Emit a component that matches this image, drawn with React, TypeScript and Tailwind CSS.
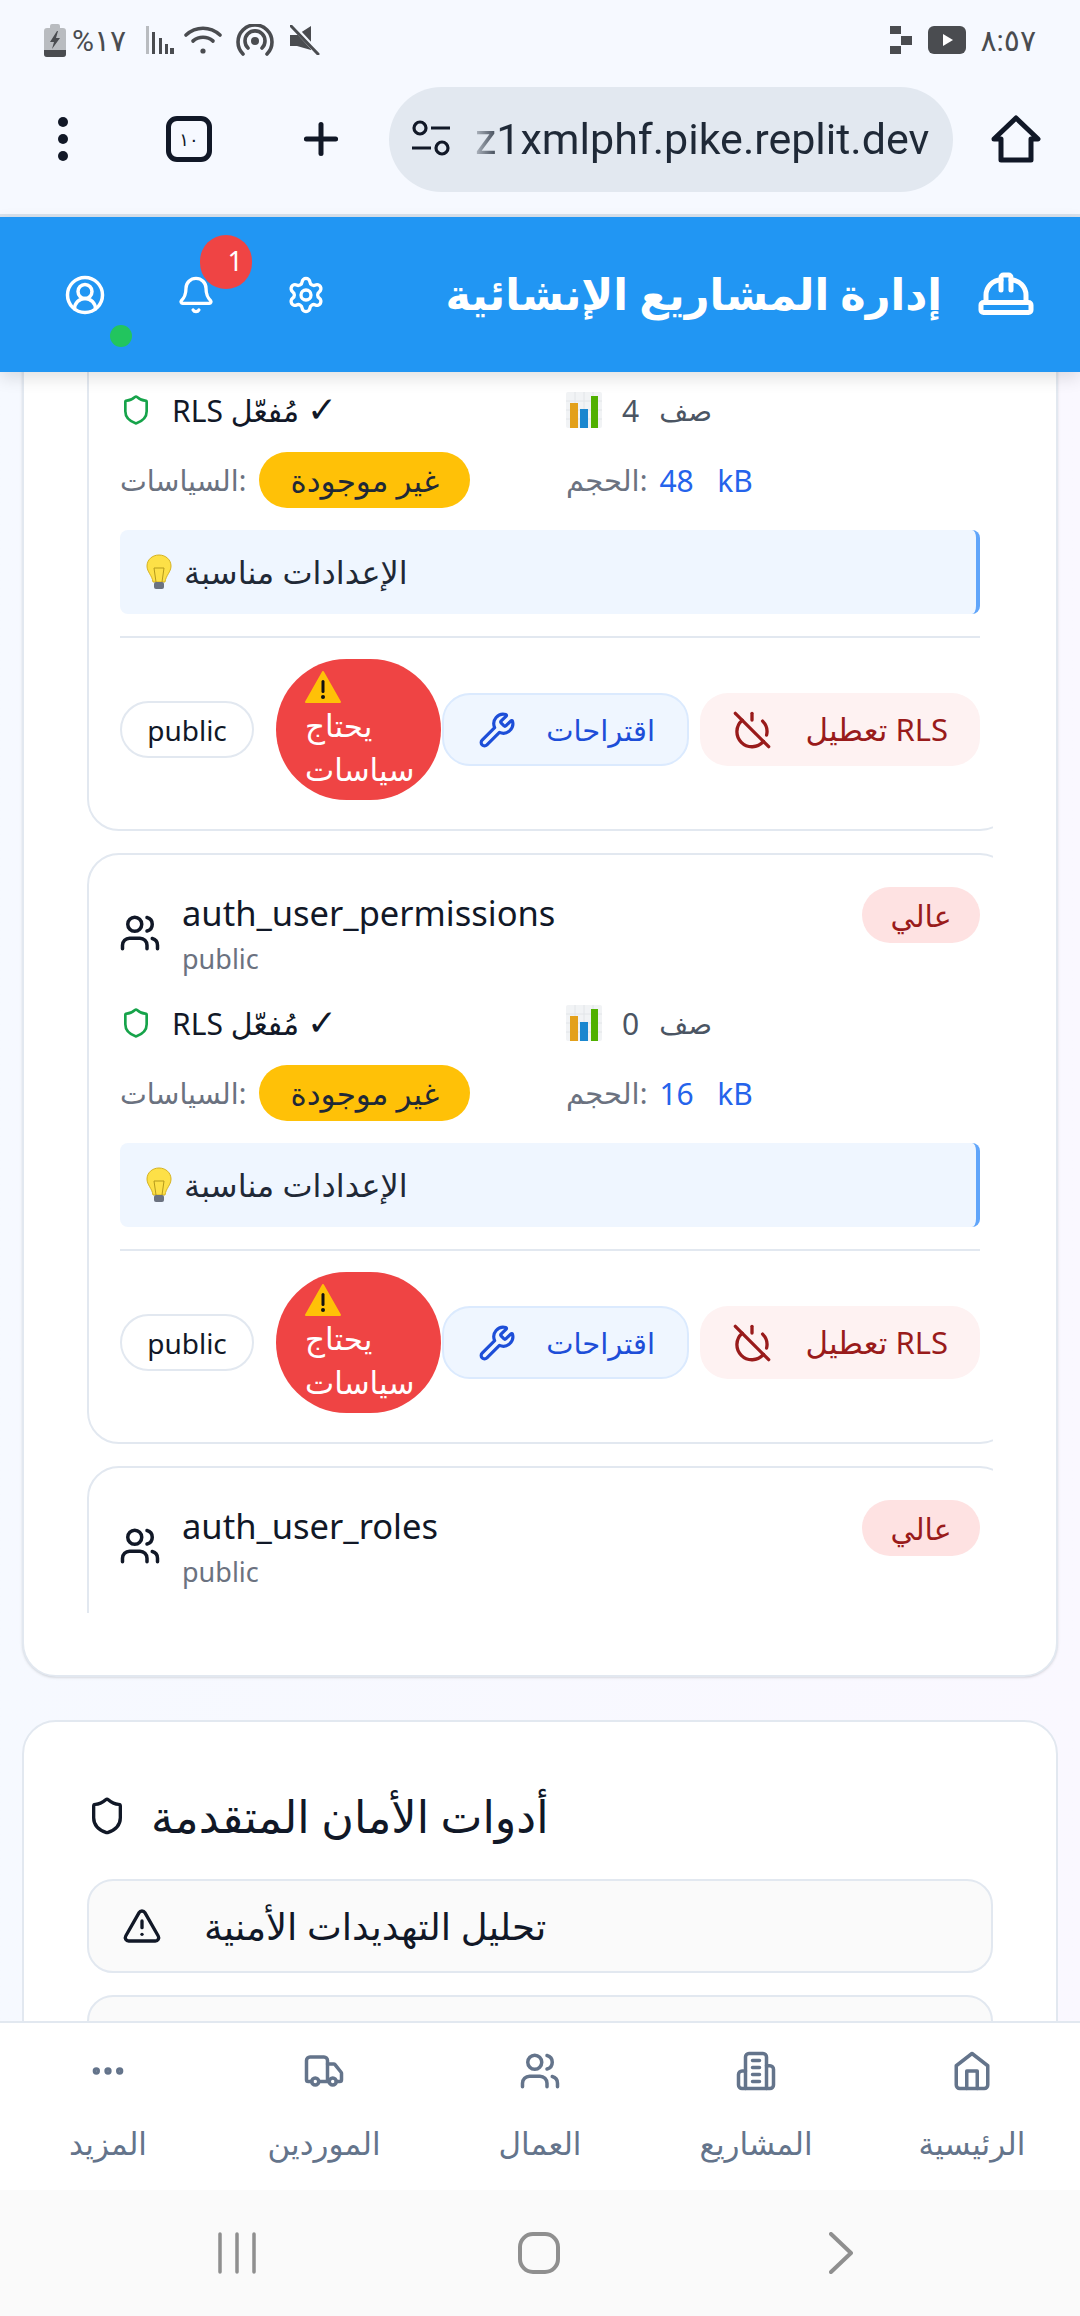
import { CircleUserRound, Bell, Ellipsis, HardHat, Plus, PowerOff, Settings, Shield, TriangleAlert, Truck, Users, Wrench } from "lucide-react";

const sans = "font-['Noto_Sans','DejaVu_Sans',sans-serif]";

function BatteryIcon() {
    return (
        <svg width="22" height="34" viewBox="0 0 22 34">
            <path d="M6 3a2 2 0 0 1 2-2h6a2 2 0 0 1 2 2v2h3a3 3 0 0 1 3 3v23a3 3 0 0 1-3 3H3a3 3 0 0 1-3-3V8a3 3 0 0 1 3-3h3Z" fill="#b9bcc0" />
            <path d="M0 27h22v4a3 3 0 0 1-3 3H3a3 3 0 0 1-3-3Z" fill="#4a4c50" />
            <path d="M13 8 6 19h4l-2 7 8-11h-4l2-7Z" fill="#4a4c50" />
        </svg>
    );
}

function SignalIcon() {
    return (
        <svg width="28" height="28" viewBox="0 0 28 28">
            <rect x="0" y="0" width="3" height="28" fill="#b9bcc0" />
            <rect x="6" y="6" width="3" height="22" fill="#4a4c50" />
            <rect x="13" y="12" width="3" height="16" fill="#4a4c50" />
            <rect x="19" y="18" width="3" height="10" fill="#4a4c50" />
            <rect x="24" y="22" width="4" height="6" fill="#4a4c50" />
        </svg>
    );
}

function WifiIcon() {
    return (
        <svg width="38" height="28" viewBox="0 0 38 28" fill="none" stroke="#4a4c50" strokeWidth="3.6" strokeLinecap="round">
            <path d="M2 9c10-9 24-9 34 0" />
            <path d="M9 15c6-5 14-5 20 0" />
            <circle cx="19" cy="25" r="2.6" fill="#4a4c50" stroke="none" />
        </svg>
    );
}

function HotspotIcon() {
    return (
        <svg width="38" height="32" viewBox="0 0 38 32" fill="none" stroke="#4a4c50" strokeWidth="3.6" strokeLinecap="round">
            <path d="M7 30a17 17 0 1 1 24 0" />
            <path d="M12 24a10 10 0 1 1 14 0" />
            <circle cx="19" cy="17" r="4" fill="#4a4c50" stroke="none" />
        </svg>
    );
}

function MuteIcon() {
    return (
        <svg width="30" height="30" viewBox="0 0 30 30">
            <path d="M0 10h7l14-9v24L7 21H0Z" fill="#4a4c50" />
            <path d="M3 1l25 27" stroke="#f5f9ff" strokeWidth="5" />
            <path d="M1 1l27 28" stroke="#4a4c50" strokeWidth="3" strokeLinecap="round" />
        </svg>
    );
}

function StatusBar() {
    return (
        <div className="h-[70px] flex items-center justify-between pl-[44px] pr-[44px] pt-[10px]">
            <div className="flex items-center">
                <BatteryIcon />
                <span className="ml-[6px] w-[66px] text-[30px] text-[#4a4c50] font-['Roboto','DejaVu_Sans',sans-serif]">%١٧</span>
                <span className="ml-[8px]"><SignalIcon /></span>
                <span className="ml-[10px]"><WifiIcon /></span>
                <span className="ml-[14px]"><HotspotIcon /></span>
                <span className="ml-[16px]"><MuteIcon /></span>
            </div>
            <div className="flex items-center">
                <svg width="22" height="28" viewBox="0 0 22 28" fill="#4a4c50">
                    <rect x="0" y="0" width="11" height="8" />
                    <rect x="11" y="10" width="11" height="9" />
                    <rect x="0" y="20" width="11" height="8" />
                </svg>
                <svg className="ml-[16px]" width="38" height="28" viewBox="0 0 38 28">
                    <rect width="38" height="28" rx="6" fill="#4a4c50" />
                    <path d="M15 8l10 6-10 6Z" fill="#fff" />
                </svg>
                <span className="ml-[14px] text-[30px] text-[#4a4c50] font-['Roboto','DejaVu_Sans',sans-serif]">٨:٥٧</span>
            </div>
        </div>
    );
}

function BrowserBar() {
    return (
        <div className="h-[147px] flex items-center border-b-[3px] border-[#d9e2ec] pb-[6px] text-[#111827]">
            <div className="w-[126px] flex justify-center">
                <div className="flex flex-col gap-[7px]">
                    <span className="w-[10px] h-[10px] rounded-full bg-[#111827]" />
                    <span className="w-[10px] h-[10px] rounded-full bg-[#111827]" />
                    <span className="w-[10px] h-[10px] rounded-full bg-[#111827]" />
                </div>
            </div>
            <div className="w-[46px] h-[46px] ml-[40px] rounded-[11px] border-[5px] border-[#111827] flex items-center justify-center text-[18px] font-['Roboto','DejaVu_Sans',sans-serif]">١٠</div>
            <Plus size={50} strokeWidth={2.4} className="ml-[84px]" />
            <div className="w-[564px] h-[105px] ml-[43px] rounded-full bg-[#e2e8f0] flex items-center pl-[22px] overflow-hidden">
                <svg className="shrink-0" width="40" height="40" viewBox="0 0 40 40" fill="none" stroke="#111827" strokeWidth="3.2">
                    <circle cx="9" cy="9" r="6" />
                    <path d="M20 9h19" />
                    <path d="M1 29h19" />
                    <circle cx="31" cy="29" r="6" />
                </svg>
                <span className="ml-[24px] text-[43px] whitespace-nowrap font-['Roboto',sans-serif] text-[#1f2937] [mask-image:linear-gradient(to_right,rgba(0,0,0,0.25),black_28px)]">z1xmlphf.pike.replit.dev</span>
            </div>
            <svg className="ml-[38px]" width="50" height="48" viewBox="0 0 50 48" fill="none" stroke="#111827" strokeWidth="5" strokeLinejoin="round">
                <path d="M25 3 47 24h-7v21H10V24H3Z" />
            </svg>
        </div>
    );
}

function AppHeader() {
    return (
        <div className={`h-[155px] shrink-0 relative z-10 bg-[#2196f3] flex items-center justify-between pl-[64px] pr-[44px] shadow-[0_6px_16px_rgba(0,0,0,0.12)] ${sans}`}>
            <div className="flex items-center gap-[70px] text-white">
                <div className="relative">
                    <CircleUserRound size={42} strokeWidth={2} />
                    <span className="absolute left-[26px] top-[31px] w-[22px] h-[22px] rounded-full bg-[#22c55e] translate-x-[20px] translate-y-[20px]" />
                </div>
                <div className="relative">
                    <Bell size={40} strokeWidth={2} />
                    <span className="absolute left-[12px] top-[-40px] w-[52px] h-[54px] translate-x-[12px] rounded-full bg-[#ef4444] flex items-center justify-end pr-[9px] text-[27px]">1</span>
                </div>
                <Settings size={40} strokeWidth={2} />
            </div>
            <div className="flex items-center gap-[34px] text-white">
                <span dir="rtl" className="text-[43px] font-bold whitespace-nowrap">إدارة المشاريع الإنشائية</span>
                <HardHat size={60} strokeWidth={2} />
            </div>
        </div>
    );
}

function Bulb() {
    return (
        <svg width="26" height="36" viewBox="0 0 26 36">
            <path d="M13 1C6 1 1 6 1 12c0 6 5 9 6 16h12c1-7 6-10 6-16 0-6-5-11-12-11Z" fill="#fde047" stroke="#d6b21f" />
            <path d="M10 28 8 14h10l-2 14" fill="none" stroke="#b59a1c" strokeWidth="1" />
            <rect x="8" y="28" width="10" height="7" rx="2" fill="#6b7280" />
        </svg>
    );
}

function BarChart() {
    return (
        <svg width="36" height="36" viewBox="0 0 36 36">
            <rect width="36" height="36" rx="2" fill="#f1f3f5" />
            <path d="M0 9h36M0 18h36M0 27h36M9 0v36M18 0v36M27 0v36" stroke="#e2e5e8" strokeWidth="1" />
            <rect x="4" y="11" width="8" height="25" fill="#e3a01a" />
            <rect x="14" y="17" width="8" height="19" fill="#1a87cf" />
            <rect x="25" y="4" width="7" height="32" fill="#50b000" />
        </svg>
    );
}

function WarnEmoji() {
    return (
        <svg width="36" height="32" viewBox="0 0 36 32">
            <path d="M18 1 35 31H1Z" fill="#ffc107" stroke="#ffc107" strokeWidth="2" strokeLinejoin="round" />
            <rect x="16.5" y="9" width="3" height="13" rx="1.5" fill="#111" />
            <circle cx="18" cy="26" r="2" fill="#111" />
        </svg>
    );
}

function BuildingIcon() {
    return (
        <svg width="42" height="42" viewBox="0 0 24 24" fill="none" stroke="currentColor" strokeWidth="2" strokeLinecap="round" strokeLinejoin="round">
            <path d="M6 22V4a2 2 0 0 1 2-2h8a2 2 0 0 1 2 2v18Z" />
            <path d="M6 12H4a2 2 0 0 0-2 2v6a2 2 0 0 0 2 2h2" />
            <path d="M18 9h2a2 2 0 0 1 2 2v9a2 2 0 0 1-2 2h-2" />
            <path d="M10 6h4M10 10h4M10 14h4M10 18h4" />
        </svg>
    );
}

function HomeIcon() {
    return (
        <svg width="42" height="42" viewBox="0 0 24 24" fill="none" stroke="currentColor" strokeWidth="2" strokeLinecap="round" strokeLinejoin="round">
            <path d="m3 9 9-7 9 7v11a2 2 0 0 1-2 2H5a2 2 0 0 1-2-2z" />
            <path d="M9 22V12h6v10" />
        </svg>
    );
}

type TableCardProps = {
    name?: string;
    rows: string;
    size: string;
};

function CardHead({ name }: { name: string }) {
    return (
        <div className="h-[133px] pt-[32px] px-[30px] flex items-start justify-between">
            <div className="flex items-center gap-[21px]">
                <Users size={42} strokeWidth={2} className="text-[#111827]" />
                <div className="flex flex-col">
                    <span className="text-[34.5px] leading-[52px] text-[#111827]">{name}</span>
                    <span className="text-[27px] leading-[40px] text-[#6b7280]">public</span>
                </div>
            </div>
            <span dir="rtl" className="w-[118px] h-[56px] rounded-full bg-[#fee2e2] text-[#991b1b] text-[30px] flex items-center justify-center">عالي</span>
        </div>
    );
}

function TableCard({ name, rows, size }: TableCardProps) {
    return (
        <div className="w-[925px] shrink-0 rounded-[32px] border-2 border-[#e2e8f0] bg-white">
            {name ? <CardHead name={name} /> : <div className="h-[133px]" />}
            <div className="grid grid-cols-[446px_1fr] px-[31px] h-[70px] items-center">
                <div className="flex items-center">
                    <Shield size={32} strokeWidth={2} className="text-[#16a34a]" />
                    <span className="ml-[20px] text-[30px] text-[#111827] whitespace-nowrap">RLS مُفعّل <span className="text-[36px] leading-none">✓</span></span>
                </div>
                <div className="flex items-center">
                    <BarChart />
                    <span className="ml-[20px] text-[30px] text-[#4b5563]">{rows}</span>
                    <span dir="rtl" className="ml-[20px] text-[28px] text-[#4b5563]">صف</span>
                </div>
            </div>
            <div className="grid grid-cols-[446px_1fr] px-[31px] h-[70px] items-center">
                <div className="flex items-center">
                    <span className="text-[28.5px] text-[#6b7280]">السياسات:</span>
                    <span dir="rtl" className="ml-[13px] w-[211px] h-[56px] rounded-full bg-[#ffc107] text-[#1f2937] text-[31px] font-medium flex items-center justify-center">غير موجودة</span>
                </div>
                <div className="flex items-center">
                    <span className="text-[29px] text-[#6b7280]">الحجم:</span>
                    <span className="ml-[12px] text-[30px] text-[#2563eb] whitespace-pre">{size}</span>
                </div>
            </div>
            <div className="ml-[31px] mr-[30px] mt-[15px] h-[84px] rounded-[8px] border-r-4 border-[#60a5fa] bg-[#eff6ff] flex items-center pl-[26px]">
                <Bulb />
                <span dir="rtl" className="ml-[12px] text-[32px] text-[#1f2937]">الإعدادات مناسبة</span>
            </div>
            <div className="ml-[31px] mr-[30px] mt-[22px] h-[2px] bg-[#e2e8f0]" />
            <div className="ml-[31px] mr-[30px] mt-[21px] mb-[29px] h-[141px] flex items-center">
                <span className="w-[134px] h-[57px] rounded-full border-2 border-[#e2e8f0] bg-white text-[28px] text-[#111827] flex items-center justify-center">public</span>
                <div className="ml-[22px] w-[165px] h-[141px] rounded-full bg-[#ef4444] text-white pl-[29px] pt-[12px] flex flex-col items-start">
                    <WarnEmoji />
                    <span dir="rtl" className="text-[31px] leading-[44px] w-[112px] text-left">يحتاج سياسات</span>
                </div>
                <button className="ml-[1px] w-[247px] h-[73px] rounded-[28px] border-2 border-[#dbeafe] bg-[#eff6ff] text-[#1d4ed8] flex items-center justify-between pl-[34px] pr-[32px]">
                    <Wrench size={38} strokeWidth={2} />
                    <span dir="rtl" className="text-[29px]">اقتراحات</span>
                </button>
                <button className="ml-[11px] w-[280px] h-[73px] rounded-[28px] bg-[#fef2f2] text-[#991b1b] flex items-center justify-between pl-[32px] pr-[32px]">
                    <PowerOff size={40} strokeWidth={2} />
                    <span className="text-[31px] whitespace-nowrap">تعطيل RLS</span>
                </button>
            </div>
        </div>
    );
}

function NavItem({ icon, label }: { icon: React.ReactNode; label: string }) {
    return (
        <div className="flex flex-col items-center text-[#64748b]">
            <div className="h-[44px] flex items-center">{icon}</div>
            <span dir="rtl" className="mt-[30px] text-[31px] leading-[40px]">{label}</span>
        </div>
    );
}

export default function App() {
    return (
        <div className={`w-[1080px] h-[2316px] overflow-hidden flex flex-col bg-[#f6f9ff] ${sans}`}>
            <StatusBar />
            <BrowserBar />
            <AppHeader />

            {/* scrolled page content */}
            <main className="flex-1 min-h-0 overflow-hidden bg-gradient-to-r from-[#f6f9ff] to-[#faf8ff]">
                <div className="-mt-[200px] mx-[22px] pt-[66px] pb-[62px] px-[63px] rounded-[34px] border-2 border-[#e2e8f0] bg-white shadow-sm">
                    <div className="h-[1373px] overflow-hidden flex flex-col gap-[22px]">
                        <TableCard rows="4" size="48   kB" />
                        <TableCard name="auth_user_permissions" rows="0" size="16   kB" />
                        <TableCard name="auth_user_roles" rows="0" size="16   kB" />
                    </div>
                </div>

                <div className="mt-[43px] mx-[22px] pt-[69px] px-[63px] pb-[40px] rounded-[34px] border-2 border-[#e2e8f0] bg-white">
                    <div className="flex items-center gap-[24px] h-[50px] text-[#111827]">
                        <Shield size={40} strokeWidth={2} />
                        <span dir="rtl" className="text-[44.5px] leading-[50px]">أدوات الأمان المتقدمة</span>
                    </div>
                    <div className="mt-[38px] flex flex-col gap-[22px]">
                        <div className="h-[94px] rounded-[26px] border-2 border-[#e2e8f0] bg-[#fafafa] flex items-center pl-[33px] gap-[42px] text-[#111827]">
                            <TriangleAlert size={40} strokeWidth={2} />
                            <span dir="rtl" className="text-[37px]">تحليل التهديدات الأمنية</span>
                        </div>
                        <div className="h-[94px] rounded-[26px] border-2 border-[#e2e8f0] bg-[#fafafa]" />
                    </div>
                </div>
            </main>

            <nav className="h-[169px] shrink-0 border-t-2 border-[#e2e8f0] bg-white grid grid-cols-5 pt-[26px]">
                <NavItem icon={<Ellipsis size={40} strokeWidth={2.4} />} label="المزيد" />
                <NavItem icon={<Truck size={42} strokeWidth={2} />} label="الموردين" />
                <NavItem icon={<Users size={42} strokeWidth={2} />} label="العمال" />
                <NavItem icon={<BuildingIcon />} label="المشاريع" />
                <NavItem icon={<HomeIcon />} label="الرئيسية" />
            </nav>

            <div className="h-[126px] shrink-0 bg-[#fafafa] grid grid-cols-[302px_302px_302px] justify-center items-center justify-items-center pr-[2px]">
                <svg width="40" height="42" viewBox="0 0 40 42" stroke="#8f8f8f" strokeWidth="3.5" strokeLinecap="round">
                    <path d="M3 2v38M20 2v38M37 2v38" />
                </svg>
                <svg width="42" height="42" viewBox="0 0 42 42" fill="none" stroke="#8f8f8f" strokeWidth="4">
                    <rect x="2" y="2" width="38" height="38" rx="13" />
                </svg>
                <svg width="24" height="42" viewBox="0 0 24 42" fill="none" stroke="#8f8f8f" strokeWidth="4" strokeLinecap="round" strokeLinejoin="round">
                    <path d="M2 2 22 21 2 40" />
                </svg>
            </div>
        </div>
    );
}
